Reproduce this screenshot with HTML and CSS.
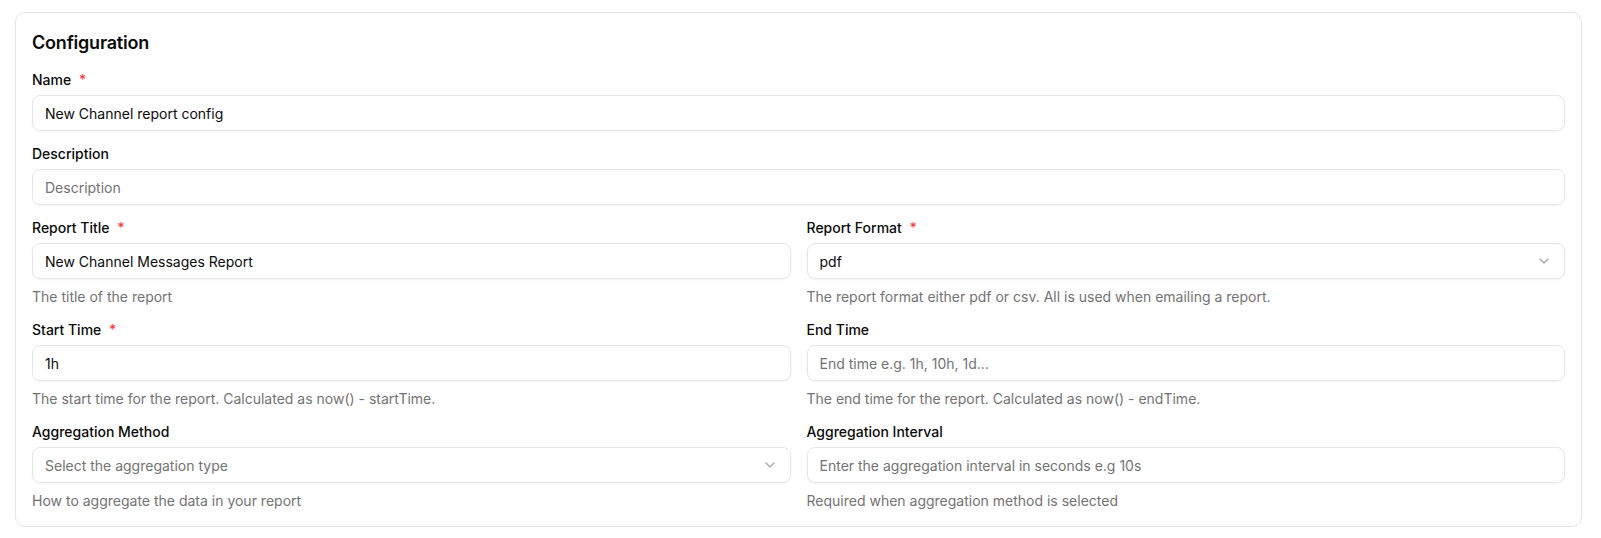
FILE: index.html
```html
<!DOCTYPE html>
<html lang="en">
<head>
<meta charset="utf-8">
<title>Configuration</title>
<link rel="stylesheet" href="styles.css">
</head>
<body>
<div class="page">
  <section class="card">
    <h2 class="card-title">Configuration</h2>
    <div class="form">
      <div class="item">
        <label class="label">Name <span class="req">*</span></label>
        <div class="input">New Channel report config</div>
      </div>
      <div class="item">
        <label class="label">Description</label>
        <div class="input placeholder">Description</div>
      </div>
      <div class="grid">
        <div class="item">
          <label class="label">Report Title <span class="req">*</span></label>
          <div class="input">New Channel Messages Report</div>
          <p class="help">The title of the report</p>
        </div>
        <div class="item">
          <label class="label">Report Format <span class="req">*</span></label>
          <div class="input select"><span>pdf</span>
            <svg class="chev" viewBox="0 0 24 24" width="16" height="16"><path d="m6 9 6 6 6-6" fill="none" stroke="currentColor" stroke-width="2" stroke-linecap="round" stroke-linejoin="round"/></svg>
          </div>
          <p class="help">The report format either pdf or csv. All is used when emailing a report.</p>
        </div>
        <div class="item">
          <label class="label">Start Time <span class="req">*</span></label>
          <div class="input">1h</div>
          <p class="help">The start time for the report. Calculated as now() - startTime.</p>
        </div>
        <div class="item">
          <label class="label">End Time</label>
          <div class="input placeholder">End time e.g. 1h, 10h, 1d...</div>
          <p class="help">The end time for the report. Calculated as now() - endTime.</p>
        </div>
        <div class="item">
          <label class="label">Aggregation Method</label>
          <div class="input select placeholder"><span>Select the aggregation type</span>
            <svg class="chev" viewBox="0 0 24 24" width="16" height="16"><path d="m6 9 6 6 6-6" fill="none" stroke="currentColor" stroke-width="2" stroke-linecap="round" stroke-linejoin="round"/></svg>
          </div>
          <p class="help">How to aggregate the data in your report</p>
        </div>
        <div class="item">
          <label class="label">Aggregation Interval</label>
          <div class="input placeholder">Enter the aggregation interval in seconds e.g 10s</div>
          <p class="help">Required when aggregation method is selected</p>
        </div>
      </div>
    </div>
  </section>
</div>
</body>
</html>
```
FILE: styles.css
```css
* { box-sizing: border-box; }
html, body { margin: 0; padding: 0; background: #fff; }
body {
  font-family: Inter, "Noto Sans", "Liberation Sans", sans-serif;
  color: #0a0a0a;
  -webkit-font-smoothing: antialiased;
}
.page {
  padding: 12px 19px 11px 15px;
}
.card {
  border: 1px solid #e5e5e5;
  border-radius: 10px;
  padding: 16px 16px 15px 16px;
  background: #fff;
}
.card-title {
  margin: 0 0 16px 0;
  font-size: 18px;
  line-height: 28px;
  font-weight: 600;
  letter-spacing: -0.2px;
}
.form {
  display: flex;
  flex-direction: column;
  gap: 16px;
}
.grid {
  display: grid;
  grid-template-columns: 1fr 1fr;
  column-gap: 16px;
  row-gap: 16px;
}
.item {
  display: flex;
  flex-direction: column;
  gap: 8px;
  min-width: 0;
}
.label {
  font-size: 14px;
  line-height: 14px;
  font-weight: 500;
  color: #0a0a0a;
}
.req {
  color: #ef4444;
  margin-left: 4px;
}
.input {
  height: 36px;
  border: 1px solid #e5e5e5;
  border-radius: 8px;
  padding: 0 12px;
  display: flex;
  align-items: center;
  font-size: 14px;
  color: #0a0a0a;
  box-shadow: 0 1px 2px rgba(0,0,0,0.05);
  white-space: nowrap;
  overflow: hidden;
}
.input.placeholder { color: #737373; }
.select { justify-content: space-between; }
.chev { color: #737373; opacity: 0.6; flex: none; }
.help {
  margin: 0;
  font-size: 14px;
  line-height: 20px;
  color: #737373;
}
```
